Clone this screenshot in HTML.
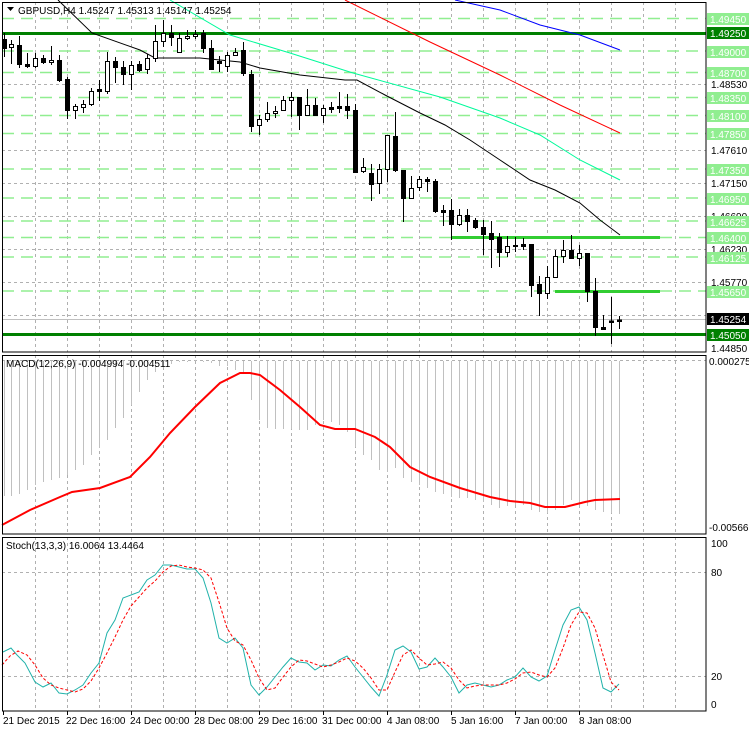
<!DOCTYPE html>
<html><head><meta charset="utf-8"><style>
body{margin:0;background:#fff;width:749px;height:732px;overflow:hidden}
svg{display:block;font-family:"Liberation Sans",sans-serif;font-size:10px}
.g{stroke:#b0b0b0;stroke-dasharray:3,3;stroke-width:1}
.lg{stroke:#90ee90;stroke-dasharray:12,7;stroke-width:1.5}
.u{fill:#fff;stroke:#000;stroke-width:1}
.d{fill:#000;stroke:#000;stroke-width:1}
.w{stroke:#000;stroke-width:1}
.hb{stroke:#c0c0c0;stroke-width:1}
</style></head><body>
<svg width="749" height="732" viewBox="0 0 749 732">
<!-- vertical grid -->
<g class="g">
<path d="M35.5 2V352M67.5 2V352M99.5 2V352M131.5 2V352M163.5 2V352M195.5 2V352M227.5 2V352M259.5 2V352M291.5 2V352M323.5 2V352M355.5 2V352M387.5 2V352M419.5 2V352M451.5 2V352M483.5 2V352M515.5 2V352M547.5 2V352M579.5 2V352M611.5 2V352M643.5 2V352M675.5 2V352"/>
<path d="M35.5 355V534M67.5 355V534M99.5 355V534M131.5 355V534M163.5 355V534M195.5 355V534M227.5 355V534M259.5 355V534M291.5 355V534M323.5 355V534M355.5 355V534M387.5 355V534M419.5 355V534M451.5 355V534M483.5 355V534M515.5 355V534M547.5 355V534M579.5 355V534M611.5 355V534M643.5 355V534M675.5 355V534"/>
<path d="M35.5 537V711M67.5 537V711M99.5 537V711M131.5 537V711M163.5 537V711M195.5 537V711M227.5 537V711M259.5 537V711M291.5 537V711M323.5 537V711M355.5 537V711M387.5 537V711M419.5 537V711M451.5 537V711M483.5 537V711M515.5 537V711M547.5 537V711M579.5 537V711M611.5 537V711M643.5 537V711M675.5 537V711"/>
<path d="M2 84.5H706M2 150.5H706M2 183.5H706M2 216.5H706M2 249.5H706M2 282.5H706M2 315.5H706"/>
<path d="M2 360.5H706M2 572.5H706M2 676.5H706"/>
</g>
<!-- light green level lines -->
<g class="lg">
<path d="M2 18.5H706M2 51H706M2 72.5H706M2 97.5H706M2 115.5H706M2 133.5H706M2 169H706M2 198H706M2 221H706M2 257H706"/>
<path d="M660 237.5H706M660 291H706M2 237.5H451M2 291H555"/>
</g>
<line x1="451" y1="237.5" x2="660" y2="237.5" stroke="#32cd32" stroke-width="3"/>
<line x1="555" y1="291.5" x2="660" y2="291.5" stroke="#32cd32" stroke-width="3"/>
<line x1="2" y1="33.5" x2="706" y2="33.5" stroke="#008000" stroke-width="3"/>
<line x1="2" y1="334.5" x2="706" y2="334.5" stroke="#008000" stroke-width="3"/>
<line x1="2" y1="319.5" x2="706" y2="319.5" stroke="#c0c0c0" stroke-width="1"/>
<!-- MAs -->
<polyline fill="none" stroke="#000" stroke-width="1" points="58,0 92,33 140,50 155,58 200,58 240,62 260,68 300,75 345,80 357,80 385,95 420,113 445,125 470,140 500,160 530,180 555,190 580,203 600,220 620,235"/>
<polyline fill="none" stroke="#00fa9a" stroke-width="1" points="170,0 230,35 290,53 353,73 440,97 500,118 540,135 580,160 620,180"/>
<polyline fill="none" stroke="#ff0000" stroke-width="1" points="345,0 430,42 500,75 560,105 620,133"/>
<polyline fill="none" stroke="#0000ff" stroke-width="1" points="455,0 500,10 540,25 580,35 620,50"/>
<!-- candles -->
<g id="c"></g>
<g>
<line class="w" x1="4.5" y1="33" x2="4.5" y2="57"/><rect class="d" x="2.5" y="39.5" width="4" height="9"/>
<line class="w" x1="11.5" y1="40" x2="11.5" y2="64"/><rect class="u" x="9.5" y="44.5" width="4" height="3"/>
<line class="w" x1="19.5" y1="36" x2="19.5" y2="68"/><rect class="d" x="17.5" y="45.5" width="4" height="19"/>
<line class="w" x1="27.5" y1="53" x2="27.5" y2="68"/><rect class="d" x="25.5" y="64.5" width="4" height="2"/>
<line class="w" x1="35.5" y1="53" x2="35.5" y2="68"/><rect class="u" x="33.5" y="58.5" width="4" height="8"/>
<line class="w" x1="43.5" y1="55" x2="43.5" y2="64"/><rect class="d" x="41.5" y="58.5" width="4" height="4"/>
<line class="w" x1="51.5" y1="46" x2="51.5" y2="65"/><rect class="u" x="49.5" y="60.5" width="4" height="2"/>
<line class="w" x1="59.5" y1="55" x2="59.5" y2="82"/><rect class="d" x="57.5" y="60.5" width="4" height="20"/>
<line class="w" x1="67.5" y1="77" x2="67.5" y2="119"/><rect class="d" x="65.5" y="79.5" width="4" height="31"/>
<line class="w" x1="75.5" y1="104" x2="75.5" y2="119"/><rect class="u" x="73.5" y="106.5" width="4" height="4"/>
<line class="w" x1="83.5" y1="100" x2="83.5" y2="113"/><rect class="u" x="81.5" y="104.5" width="4" height="3"/>
<line class="w" x1="91.5" y1="88" x2="91.5" y2="106"/><rect class="u" x="89.5" y="91.5" width="4" height="13"/>
<line class="w" x1="99.5" y1="80" x2="99.5" y2="101"/><rect class="d" x="97.5" y="89.5" width="4" height="2"/>
<line class="w" x1="107.5" y1="52" x2="107.5" y2="94"/><rect class="u" x="105.5" y="61.5" width="4" height="30"/>
<line class="w" x1="115.5" y1="57" x2="115.5" y2="83"/><rect class="d" x="113.5" y="61.5" width="4" height="6"/>
<line class="w" x1="123.5" y1="61" x2="123.5" y2="85"/><rect class="d" x="121.5" y="67.5" width="4" height="7"/>
<line class="w" x1="131.5" y1="61" x2="131.5" y2="90"/><rect class="u" x="129.5" y="65.5" width="4" height="9"/>
<line class="w" x1="139.5" y1="61" x2="139.5" y2="72"/><rect class="d" x="137.5" y="64.5" width="4" height="6"/>
<line class="w" x1="147.5" y1="54" x2="147.5" y2="74"/><rect class="u" x="145.5" y="58.5" width="4" height="11"/>
<line class="w" x1="155.5" y1="25" x2="155.5" y2="62"/><rect class="u" x="153.5" y="41.5" width="4" height="17"/>
<line class="w" x1="163.5" y1="20" x2="163.5" y2="47"/><rect class="u" x="161.5" y="33.5" width="4" height="8"/>
<line class="w" x1="171.5" y1="25" x2="171.5" y2="46"/><rect class="d" x="169.5" y="33.5" width="4" height="4"/>
<line class="w" x1="179.5" y1="33" x2="179.5" y2="53"/><rect class="u" x="177.5" y="38.5" width="4" height="14"/>
<line class="w" x1="187.5" y1="30" x2="187.5" y2="40"/><rect class="u" x="185.5" y="36.5" width="4" height="2"/>
<line class="w" x1="195.5" y1="30" x2="195.5" y2="39"/><rect class="u" x="193.5" y="34.5" width="4" height="2"/>
<line class="w" x1="203.5" y1="30" x2="203.5" y2="53"/><rect class="d" x="201.5" y="33.5" width="4" height="15"/>
<line class="w" x1="211.5" y1="40" x2="211.5" y2="70"/><rect class="d" x="209.5" y="48.5" width="4" height="21"/>
<line class="w" x1="219.5" y1="56" x2="219.5" y2="72"/><rect class="d" x="217.5" y="61.5" width="4" height="2"/>
<line class="w" x1="227.5" y1="52" x2="227.5" y2="72"/><rect class="u" x="225.5" y="55.5" width="4" height="11"/>
<line class="w" x1="235.5" y1="48" x2="235.5" y2="55"/><rect class="u" x="233.5" y="52.5" width="4" height="3"/>
<line class="w" x1="243.5" y1="42" x2="243.5" y2="76"/><rect class="d" x="241.5" y="50.5" width="4" height="23"/>
<line class="w" x1="251.5" y1="70" x2="251.5" y2="132"/><rect class="d" x="249.5" y="74.5" width="4" height="52"/>
<line class="w" x1="259.5" y1="115" x2="259.5" y2="135"/><rect class="u" x="257.5" y="119.5" width="4" height="6"/>
<line class="w" x1="267.5" y1="102" x2="267.5" y2="122"/><rect class="u" x="265.5" y="113.5" width="4" height="6"/>
<line class="w" x1="275.5" y1="106" x2="275.5" y2="118"/><rect class="u" x="273.5" y="111.5" width="4" height="2"/>
<line class="w" x1="283.5" y1="96" x2="283.5" y2="110"/><rect class="u" x="281.5" y="100.5" width="4" height="10"/>
<line class="w" x1="291.5" y1="92" x2="291.5" y2="117"/><rect class="u" x="289.5" y="97.5" width="4" height="3"/>
<line class="w" x1="299.5" y1="97" x2="299.5" y2="130"/><rect class="d" x="297.5" y="97.5" width="4" height="18"/>
<line class="w" x1="307.5" y1="89" x2="307.5" y2="115"/><rect class="u" x="305.5" y="105.5" width="4" height="10"/>
<line class="w" x1="315.5" y1="98" x2="315.5" y2="115"/><rect class="d" x="313.5" y="105.5" width="4" height="10"/>
<line class="w" x1="323.5" y1="105" x2="323.5" y2="123"/><rect class="u" x="321.5" y="108.5" width="4" height="7"/>
<line class="w" x1="331.5" y1="102" x2="331.5" y2="113"/><rect class="d" x="329.5" y="107.5" width="4" height="2"/>
<line class="w" x1="339.5" y1="92" x2="339.5" y2="113"/><rect class="d" x="337.5" y="106.5" width="4" height="2"/>
<line class="w" x1="347.5" y1="94" x2="347.5" y2="119"/><rect class="d" x="345.5" y="106.5" width="4" height="4"/>
<line class="w" x1="355.5" y1="104" x2="355.5" y2="172"/><rect class="d" x="353.5" y="110.5" width="4" height="62"/>
<line class="w" x1="363.5" y1="158" x2="363.5" y2="173"/><rect class="u" x="361.5" y="167.5" width="4" height="4"/>
<line class="w" x1="371.5" y1="164" x2="371.5" y2="201"/><rect class="d" x="369.5" y="173.5" width="4" height="11"/>
<line class="w" x1="379.5" y1="164" x2="379.5" y2="194"/><rect class="u" x="377.5" y="169.5" width="4" height="14"/>
<line class="w" x1="387.5" y1="135" x2="387.5" y2="182"/><rect class="u" x="385.5" y="135.5" width="4" height="34"/>
<line class="w" x1="395.5" y1="112" x2="395.5" y2="172"/><rect class="d" x="393.5" y="136.5" width="4" height="34"/>
<line class="w" x1="403.5" y1="170" x2="403.5" y2="222"/><rect class="d" x="401.5" y="170.5" width="4" height="28"/>
<line class="w" x1="411.5" y1="176" x2="411.5" y2="199"/><rect class="u" x="409.5" y="188.5" width="4" height="10"/>
<line class="w" x1="419.5" y1="176" x2="419.5" y2="191"/><rect class="u" x="417.5" y="179.5" width="4" height="8"/>
<line class="w" x1="427.5" y1="177" x2="427.5" y2="192"/><rect class="d" x="425.5" y="179.5" width="4" height="2"/>
<line class="w" x1="435.5" y1="179" x2="435.5" y2="213"/><rect class="d" x="433.5" y="181.5" width="4" height="30"/>
<line class="w" x1="443.5" y1="205" x2="443.5" y2="226"/><rect class="d" x="441.5" y="210.5" width="4" height="2"/>
<line class="w" x1="451.5" y1="199" x2="451.5" y2="240"/><rect class="d" x="449.5" y="210.5" width="4" height="14"/>
<line class="w" x1="459.5" y1="209" x2="459.5" y2="226"/><rect class="u" x="457.5" y="215.5" width="4" height="9"/>
<line class="w" x1="467.5" y1="209" x2="467.5" y2="232"/><rect class="d" x="465.5" y="215.5" width="4" height="6"/>
<line class="w" x1="475.5" y1="218" x2="475.5" y2="229"/><rect class="d" x="473.5" y="220.5" width="4" height="7"/>
<line class="w" x1="483.5" y1="220" x2="483.5" y2="255"/><rect class="d" x="481.5" y="227.5" width="4" height="7"/>
<line class="w" x1="491.5" y1="221" x2="491.5" y2="268"/><rect class="d" x="489.5" y="233.5" width="4" height="6"/>
<line class="w" x1="499.5" y1="233" x2="499.5" y2="267"/><rect class="d" x="497.5" y="237.5" width="4" height="15"/>
<line class="w" x1="507.5" y1="236" x2="507.5" y2="257"/><rect class="u" x="505.5" y="246.5" width="4" height="6"/>
<line class="w" x1="515.5" y1="237" x2="515.5" y2="252"/><rect class="d" x="513.5" y="245.5" width="4" height="1"/>
<line class="w" x1="523.5" y1="238" x2="523.5" y2="250"/><rect class="d" x="521.5" y="244.5" width="4" height="2"/>
<line class="w" x1="531.5" y1="244" x2="531.5" y2="297"/><rect class="d" x="529.5" y="244.5" width="4" height="41"/>
<line class="w" x1="539.5" y1="276" x2="539.5" y2="316"/><rect class="d" x="537.5" y="284.5" width="4" height="9"/>
<line class="w" x1="547.5" y1="266" x2="547.5" y2="299"/><rect class="u" x="545.5" y="277.5" width="4" height="16"/>
<line class="w" x1="555.5" y1="250" x2="555.5" y2="277"/><rect class="u" x="553.5" y="256.5" width="4" height="21"/>
<line class="w" x1="563.5" y1="240" x2="563.5" y2="263"/><rect class="u" x="561.5" y="250.5" width="4" height="6"/>
<line class="w" x1="571.5" y1="235" x2="571.5" y2="258"/><rect class="d" x="569.5" y="250.5" width="4" height="8"/>
<line class="w" x1="579.5" y1="245" x2="579.5" y2="266"/><rect class="u" x="577.5" y="253.5" width="4" height="5"/>
<line class="w" x1="587.5" y1="253" x2="587.5" y2="302"/><rect class="d" x="585.5" y="253.5" width="4" height="38"/>
<line class="w" x1="595.5" y1="278" x2="595.5" y2="336"/><rect class="d" x="593.5" y="291.5" width="4" height="36"/>
<line class="w" x1="603.5" y1="315" x2="603.5" y2="330"/><rect class="d" x="601.5" y="327.5" width="4" height="2"/>
<line class="w" x1="611.5" y1="297" x2="611.5" y2="344"/><rect class="d" x="609.5" y="321" width="4" height="1.5"/>
<line class="w" x1="619.5" y1="316" x2="619.5" y2="329"/><rect class="d" x="617.5" y="320" width="4" height="1.5"/>
</g>
<!-- MACD histogram -->
<path class="hb" d="M4.5 361V496M11.5 361V496M19.5 361V494M27.5 361V490M35.5 361V485M43.5 361V482M51.5 361V480M59.5 361V478M67.5 361V475M75.5 361V470M83.5 361V465M91.5 361V455M99.5 361V448M107.5 361V440M115.5 361V428M123.5 361V418M131.5 361V405M139.5 361V392M147.5 361V380M155.5 361V372M163.5 361V368M171.5 361V364M179.5 361V362M187.5 361V362M195.5 361V360M203.5 361V362M211.5 361V363M219.5 361V366M227.5 361V366M235.5 361V370M243.5 361V374M251.5 361V400M259.5 361V420M267.5 361V428M275.5 361V429M283.5 361V429M291.5 361V429M299.5 361V430M307.5 361V430M315.5 361V425M323.5 361V420M331.5 361V422M339.5 361V425M347.5 361V432M355.5 361V447M363.5 361V455M371.5 361V460M379.5 361V470M387.5 361V472M395.5 361V468M403.5 361V478M411.5 361V482M419.5 361V485M427.5 361V488M435.5 361V492M443.5 361V494M451.5 361V497M459.5 361V498M467.5 361V498M475.5 361V500M483.5 361V502M491.5 361V505M499.5 361V508M507.5 361V506M515.5 361V505M523.5 361V505M531.5 361V510M539.5 361V512M547.5 361V513M555.5 361V510M563.5 361V505M571.5 361V500M579.5 361V505M587.5 361V506M595.5 361V510M603.5 361V512M611.5 361V513M619.5 361V514"/>
<polyline fill="none" stroke="#ff0000" stroke-width="2" points="2,525 30,510 60,497 72,492 100,488 130,477 150,457 170,433 195,407 220,383 240,373 250,373 260,375 280,390 300,407 320,425 335,429 355,429 375,437 390,447 410,467 430,477 460,488 490,497 510,501 530,503 545,507 565,507 585,502 595,500 620,499"/>
<!-- Stoch -->
<polyline fill="none" stroke="#20b2aa" stroke-width="1" points="3,652 11,648 17,655 25,663 35,682 43,687 51,683 59,693 67,694 75,690 83,685 91,673 99,663 107,633 115,620 123,598 131,595 139,592 147,580 155,575 163,565 171,565 179,567 187,569 195,569 203,578 211,603 219,638 227,643 235,638 243,648 251,685 259,695 267,687 275,677 283,667 291,658 299,662 307,663 315,670 323,665 331,666 339,660 347,656 355,667 363,677 371,687 379,696 387,675 395,650 403,646 411,652 419,669 427,667 435,658 443,667 451,677 459,693 467,685 475,683 483,685 491,687 499,685 507,680 515,677 523,668 531,677 539,681 547,676 555,650 563,625 571,610 579,607 587,620 595,653 603,688 611,692 619,684"/>
<polyline fill="none" stroke="#ff0000" stroke-width="1" stroke-dasharray="3,2" points="2,665 10,656 18,651 27,655 35,665 43,678 51,685 59,688 67,690 75,692 83,689 91,681 99,668 107,653 115,637 123,620 131,606 139,597 147,588 155,581 163,572 171,566 179,565 187,567 195,568 203,570 211,578 219,602 227,628 235,641 243,645 251,660 259,678 267,690 275,688 283,677 291,667 299,660 307,661 315,664 323,667 331,665 339,662 347,658 355,661 363,668 371,678 379,690 387,690 395,672 403,655 411,650 419,658 427,665 435,664 443,662 451,668 459,680 467,688 475,686 483,685 491,685 499,685 507,683 515,679 523,673 531,672 539,675 547,677 555,668 563,648 571,625 579,612 587,613 595,628 603,655 611,682 619,690"/>
<!-- frames -->
<g fill="none" stroke="#000" stroke-width="1">
<rect x="2.5" y="2.5" width="703.5" height="349.5"/>
<rect x="2.5" y="355.5" width="703.5" height="178.5"/>
<rect x="2.5" y="537.5" width="703.5" height="173.5"/>
</g>
<!-- header texts -->
<polygon points="7,7 14,7 10.5,11" fill="#000"/>
<text x="18" y="14" fill="#000">GBPUSD,H4  1.45247 1.45313 1.45147 1.45254</text>
<text x="6" y="367" fill="#000">MACD(12,26,9) -0.004994 -0.004511</text>
<text x="6" y="549" fill="#000">Stoch(13,3,3) 16.0064 13.4464</text>
<!-- price axis -->
<g fill="#000">
<text x="711" y="88">1.48530</text>
<text x="711" y="154">1.47610</text>
<text x="711" y="187">1.47150</text>
<text x="711" y="220">1.46690</text>
<text x="711" y="253">1.46230</text>
<text x="711" y="286">1.45770</text>
<text x="711" y="352">1.44850</text>
<text x="709" y="365">0.000275</text>
<text x="709" y="531">-0.005665</text>
<text x="711" y="547">100</text>
<text x="711" y="576">80</text>
<text x="711" y="680">20</text>
<text x="711" y="708">0</text>
</g>
<g>
<rect x="707" y="13" width="42" height="12" fill="#90ee90"/>
<rect x="707" y="46" width="42" height="12" fill="#90ee90"/>
<rect x="707" y="67" width="42" height="12" fill="#90ee90"/>
<rect x="707" y="92" width="42" height="12" fill="#90ee90"/>
<rect x="707" y="110" width="42" height="12" fill="#90ee90"/>
<rect x="707" y="128" width="42" height="12" fill="#90ee90"/>
<rect x="707" y="164" width="42" height="12" fill="#90ee90"/>
<rect x="707" y="193" width="42" height="12" fill="#90ee90"/>
<rect x="707" y="216" width="42" height="12" fill="#90ee90"/>
<rect x="707" y="232" width="42" height="12" fill="#90ee90"/>
<rect x="707" y="252" width="42" height="12" fill="#90ee90"/>
<rect x="707" y="286" width="42" height="12" fill="#90ee90"/>
<rect x="707" y="27" width="42" height="12" fill="#008000"/>
<rect x="707" y="329" width="42" height="12" fill="#008000"/>
<rect x="707" y="313" width="42" height="12" fill="#000"/>
</g>
<g fill="#fff">
<text x="710" y="23">1.49450</text>
<text x="710" y="37">1.49250</text>
<text x="710" y="56">1.49000</text>
<text x="710" y="77">1.48700</text>
<text x="710" y="102">1.48350</text>
<text x="710" y="120">1.48100</text>
<text x="710" y="138">1.47850</text>
<text x="710" y="174">1.47350</text>
<text x="710" y="203">1.46950</text>
<text x="710" y="226">1.46625</text>
<text x="710" y="242">1.46400</text>
<text x="710" y="262">1.46125</text>
<text x="710" y="296">1.45650</text>
<text x="710" y="323">1.45254</text>
<text x="710" y="339">1.45050</text>
</g>
<!-- time axis -->
<path stroke="#000" d="M3.5 711V715M67.5 711V715M131.5 711V715M195.5 711V715M259.5 711V715M323.5 711V715M387.5 711V715M451.5 711V715M515.5 711V715M579.5 711V715"/>
<g fill="#000">
<text x="3" y="724">21 Dec 2015</text>
<text x="66" y="724">22 Dec 16:00</text>
<text x="130" y="724">24 Dec 00:00</text>
<text x="194" y="724">28 Dec 08:00</text>
<text x="258" y="724">29 Dec 16:00</text>
<text x="322" y="724">31 Dec 00:00</text>
<text x="387" y="724">4 Jan 08:00</text>
<text x="451" y="724">5 Jan 16:00</text>
<text x="515" y="724">7 Jan 00:00</text>
<text x="579" y="724">8 Jan 08:00</text>
</g>
</svg>
</body></html>
